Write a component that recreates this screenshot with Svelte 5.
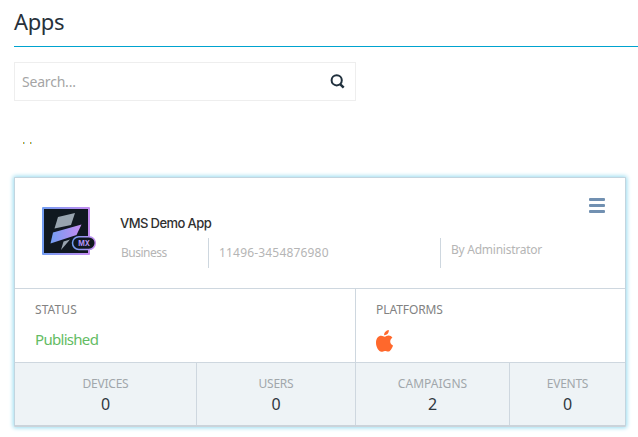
<script>
  const counts = [
    { label: 'DEVICES', value: 0, width: 182 },
    { label: 'USERS', value: 0, width: 159 },
    { label: 'CAMPAIGNS', value: 2, width: 154 },
    { label: 'EVENTS', value: 0, width: 115 }
  ];
</script>

<main>
  <h1><span>Apps</span></h1>

  <label class="search">
    <input type="text" placeholder="Search..." />
    <svg width="15" height="15" viewBox="0 0 15 15" fill="none" stroke="#20303d">
      <circle cx="6.7" cy="6.3" r="5.1" stroke-width="2" />
      <path d="M9.8 9.8 13.7 13.6" stroke-width="2.5" />
    </svg>
  </label>

  <div class="dots"><i></i><i></i></div>

  <section class="card">
    <header>
      <svg class="logo" width="55" height="50" viewBox="0 0 55 50">
        <defs>
          <linearGradient id="edge" x1="0" x2="1" y1="0" y2="0">
            <stop offset="0" stop-color="#719df2" />
            <stop offset="1" stop-color="#c68cf1" />
          </linearGradient>
        </defs>
        <rect x="0" y="0" width="48" height="48" rx="1" fill="url(#edge)" />
        <rect x="2" y="2" width="44" height="44" fill="#101820" />
        <path d="M16 10 33 6 29 18 12.5 21.5Z" fill="#98a4af" />
        <path d="M11 25.5 39.5 17.5 34.5 28 8.5 36.5Z" fill="url(#edge)" />
        <path d="M21.5 34.5 28 32.5 19 43Z" fill="#98a4af" />
        <rect x="30.5" y="29.7" width="22.8" height="12.8" rx="6.4" fill="#101820" stroke="url(#edge)" stroke-width="1.5" />
        <text x="42" y="38.7" text-anchor="middle" fill="#b395f5">MX</text>
      </svg>
      <div class="info">
        <h2>VMS Demo App</h2>
        <div class="meta">
          <span class="kind">Business</span>
          <span class="number">11496-3454876980</span>
          <span class="author">By Administrator</span>
        </div>
      </div>
      <svg class="menu" width="16" height="15" viewBox="0 0 16 15" fill="#7190b1">
        <rect width="16" height="3" rx="1" />
        <rect y="6" width="16" height="3" rx="1" />
        <rect y="12" width="16" height="3" rx="1" />
      </svg>
    </header>

    <div class="details">
      <div class="status">
        <h3>STATUS</h3>
        <p>Published</p>
      </div>
      <div class="platforms">
        <h3 class="wide">PLATFORMS</h3>
        <svg width="17" height="22" viewBox="0 0 17 22" fill="#ff682c">
          <path d="M12.8 0C13.2 2.8 10.9 5.3 8.1 5.2 7.9 2.6 10.1.4 12.8 0Z" />
          <path d="M8.7 6.8C9.8 6.8 10.8 5.6 12.6 5.6 14.1 5.6 15.5 6.4 16.4 7.7 13.2 9.6 13.7 14.1 17 15.4 16 18.4 14.1 21.6 12.1 21.6 10.8 21.6 10.3 20.9 8.9 20.9 7.4 20.9 6.8 21.7 5.5 21.7 2.8 21.7 0 17.1 0 12.7 0 8.4 2.5 5.8 5.2 5.8 6.8 5.8 7.8 6.8 8.7 6.8Z" />
        </svg>
      </div>
    </div>

    <footer>
      {#each counts as item}
        <div class="count" style="width: {item.width}px">
          <span class:wide={item.label === 'CAMPAIGNS'}>{item.label}</span>
          <strong>{item.value}</strong>
        </div>
      {/each}
    </footer>
  </section>
</main>

<style>
  :global(body) {
    background: #fff;
    overflow: hidden;
  }
  main {
    width: 638px;
    height: 437px;
    box-sizing: border-box;
    padding-left: 14px;
    font-family: 'Noto Sans', sans-serif;
  }
  h1, h2, h3, p { margin: 0; font-weight: 400; }
  h1 {
    height: 46px;
    border-bottom: 1px solid #00a3cf;
    font-size: 22px;
    line-height: 43px;
    letter-spacing: -0.4px;
    color: #27313b;
  }
  .search {
    display: flex;
    align-items: center;
    justify-content: space-between;
    box-sizing: border-box;
    width: 342px;
    height: 39px;
    margin-top: 15px;
    padding: 0 10px 0 7px;
    border: 1px solid #eee;
  }
  input {
    width: 200px;
    padding: 0;
    border: 0;
    outline: 0;
    font: 14px 'Noto Sans', sans-serif;
    letter-spacing: -0.2px;
  }
  input::placeholder { color: #a5a5a5; opacity: 1; }
  .dots { display: flex; gap: 5px; padding: 41px 0 0 9px; }
  .dots i { width: 2px; height: 2px; background: linear-gradient(90deg, #d3a326 50%, #90d5ff 50%); }
  .card {
    box-sizing: border-box;
    width: 612px;
    height: 250px;
    margin-top: 33px;
    border: 1px solid #c3d5df;
    border-bottom: 2px solid #cbd3da;
    border-radius: 1px;
    box-shadow: 0 0 4px 1px #9adcf0;
  }
  header {
    display: flex;
    height: 110px;
    border-bottom: 1px solid #ced7df;
  }
  .logo { margin: 29px 0 0 27px; flex: none; }
  .logo text { font: 700 7px 'Inter', sans-serif; }
  .info { width: 492px; padding: 36px 0 0 23px; box-sizing: border-box; flex: none; }
  h2 {
    font: 500 13px/19px 'Inter', sans-serif;
    letter-spacing: -0.58px;
    color: #303030;
  }
  .meta {
    display: flex;
    height: 30px;
    margin-top: 5px;
    font-size: 12px;
    line-height: 30px;
    color: #b5b5b5;
  }
  .meta span { box-sizing: border-box; flex: none; white-space: nowrap; }
  .kind { width: 88px; padding-left: 1px; letter-spacing: -0.5px; }
  .number { width: 232px; padding-left: 10px; border-left: 1px solid #ced7df; letter-spacing: 0.18px; }
  .author { padding-left: 10px; border-left: 1px solid #ced7df; line-height: 24px; letter-spacing: -0.25px; }
  .menu { margin-top: 20px; flex: none; }
  .details { display: flex; height: 73px; }
  .status { box-sizing: border-box; width: 341px; padding: 12px 0 0 20px; border-right: 1px solid #ced7df; }
  .platforms { padding: 12px 0 0 20px; }
  h3 { font-size: 12px; line-height: 18px; letter-spacing: 0.1px; color: #828282; }
  h3.wide { letter-spacing: -0.08px; }
  p {
    margin-top: 10px;
    font-size: 15px;
    line-height: 20px;
    letter-spacing: -0.7px;
    color: #63bc63;
  }
  .platforms svg { display: block; margin-top: 11px; }
  footer { display: flex; height: 62px; border-top: 1px solid #ced7df; background: #eef3f6; }
  .count {
    box-sizing: border-box;
    display: flex;
    flex-direction: column;
    align-items: center;
    padding-top: 12px;
    border-right: 1px solid #ced7df;
  }
  .count:last-child { border-right: 0; }
  .count span { font-size: 12px; line-height: 18px; letter-spacing: -0.25px; color: #a1a7ab; }
  .count span.wide { letter-spacing: 0.05px; }
  .count strong { font-size: 16px; font-weight: 400; line-height: 22px; color: #303740; }
</style>
